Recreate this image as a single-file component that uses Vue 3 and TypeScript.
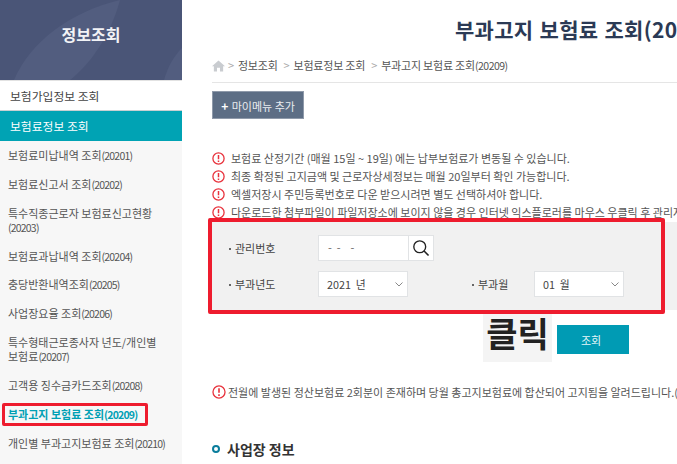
<script setup lang="ts">
interface SubItem { name: string; code: string; current?: boolean }
const subItems: SubItem[] = [
  { name: '보험료미납내역 조회', code: '(20201)' },
  { name: '보험료신고서 조회', code: '(20202)' },
  { name: '특수직종근로자 보험료신고현황', code: '(20203)' },
  { name: '보험료과납내역 조회', code: '(20204)' },
  { name: '충당반환내역조회', code: '(20205)' },
  { name: '사업장요율 조회', code: '(20206)' },
  { name: '특수형태근로종사자 년도/개인별 보험료', code: '(20207)' },
  { name: '고객용 징수금카드조회', code: '(20208)' },
  { name: '부과고지 보험료 조회', code: '(20209)', current: true },
  { name: '개인별 부과고지보험료 조회', code: '(20210)' },
]
const notices: string[] = [
  '보험료 산정기간 (매월 15일 ~ 19일) 에는 납부보험료가 변동될 수 있습니다.',
  '최종 확정된 고지금액 및 근로자상세정보는 매월 20일부터 확인 가능합니다.',
  '엑셀저장시 주민등록번호로 다운 받으시려면 별도 선택하셔야 합니다.',
  '다운로드한 첨부파일이 파일저장소에 보이지 않을 경우 인터넷 익스플로러를 마우스 우클릭 후 관리자',
]
</script>

<template>
  <div class="page">
    <aside class="side">
      <div class="side-head">
        <svg class="side-deco" viewBox="0 0 182 80" aria-hidden="true">
          <path d="M14 80C30 42 70 12 120 0C112 30 95 60 70 80Z" fill="#525d7f" />
          <path d="M164 80C168 66 174 56 182 48V80Z" fill="#525d7f" />
        </svg>
        <span class="side-title">정보조회</span>
      </div>
      <div class="top-item">보험가입정보 조회</div>
      <div class="top-item active">보험료정보 조회</div>
      <ul class="sub">
        <li v-for="s in subItems" :key="s.code" :class="{ current: s.current }">{{ s.name }}<span class="code">{{ s.code }}</span></li>
      </ul>
    </aside>

    <main class="main">
      <h1 class="title">부과고지 보험료 조회(20209)</h1>
      <div class="crumbs">
        <svg class="home" width="13" height="12" viewBox="0 0 14 12" aria-hidden="true">
          <path d="M7 0L14 6.3H12V12H8.6V8H5.4V12H2V6.3H0Z" fill="#c9ccd0" />
        </svg>
        <span class="sep">&gt;</span><span>정보조회</span>
        <span class="sep">&gt;</span><span>보험료정보 조회</span>
        <span class="sep">&gt;</span><span>부과고지 보험료 조회<span class="code wide">(20209)</span></span>
      </div>
      <button class="my-menu"><b>+</b> 마이메뉴 추가</button>

      <ul class="notices">
        <li v-for="n in notices" :key="n">
          <svg class="warn" width="13" height="13" viewBox="0 0 13 13" aria-hidden="true">
            <circle cx="6.5" cy="6.5" r="5.6" fill="none" stroke="#e8323c" stroke-width="1.3" />
            <path d="M6.5 3v4.2M6.5 8.6v1.5" stroke="#e8323c" stroke-width="1.5" />
          </svg>
          <span>{{ n }}</span>
        </li>
      </ul>

      <section class="panel">
        <div class="panel-row">
          <span class="label">관리번호</span>
          <div class="search">
            <span class="num">- &nbsp;- &nbsp; &nbsp;-</span>
            <span class="search-btn">
              <svg width="18" height="18" viewBox="0 0 20 20" aria-hidden="true">
                <circle cx="8.6" cy="8.6" r="6.6" fill="none" stroke="#222" stroke-width="1.5" />
                <path d="M13.4 13.4L18.4 18.4" stroke="#222" stroke-width="1.7" />
              </svg>
            </span>
          </div>
        </div>
        <div class="panel-row">
          <span class="label">부과년도</span>
          <div class="select">
            <span>2021 &nbsp;년</span>
            <svg width="8" height="5" viewBox="0 0 8 5" aria-hidden="true"><path d="M.5.5L4 4 7.5.5" fill="none" stroke="#888" /></svg>
          </div>
          <span class="label second">부과월</span>
          <div class="select">
            <span>01 &nbsp;월</span>
            <svg width="8" height="5" viewBox="0 0 8 5" aria-hidden="true"><path d="M.5.5L4 4 7.5.5" fill="none" stroke="#888" /></svg>
          </div>
        </div>
        <div class="red-box"></div>
      </section>

      <div class="actions">
        <span class="click">클릭</span>
        <button class="query">조회</button>
      </div>

      <p class="bottom-note">
        <svg class="warn big" width="14" height="14" viewBox="0 0 13 13" aria-hidden="true">
          <circle cx="6.5" cy="6.5" r="5.6" fill="none" stroke="#e8323c" stroke-width="1.2" />
          <path d="M6.5 3v4.2M6.5 8.6v1.5" stroke="#e8323c" stroke-width="1.5" />
        </svg>
        <span>전월에 발생된 정산보험료 2회분이 존재하며 당월 총고지보험료에 합산되어 고지됨을 알려드립니다.(*</span>
      </p>

      <h2 class="section"><i></i>사업장 정보</h2>
    </main>
  </div>
</template>

<style>
html, body { margin: 0; overflow: hidden; width: 677px; height: 464px; background: #fff; }
</style>

<style scoped>
.page {
  display: flex;
  width: 677px;
  height: 464px;
  overflow: hidden;
  font-family: "Noto Sans CJK KR", "Noto Sans", sans-serif;
  color: #444;
}
.side {
  flex: 0 0 182px;
  width: 182px;
  background: #f7f7f7;
}
.side-head {
  position: relative;
  height: 80px;
  background: #4a5577;
  display: flex;
  align-items: center;
  justify-content: center;
}
.side-deco { position: absolute; inset: 0; width: 100%; height: 100%; }
.side-title {
  position: relative;
  color: #f2f3f6;
  font-size: 16px;
  font-weight: 700;
  top: -6px;
}
.top-item {
  height: 29px;
  line-height: 29px;
  padding-left: 10px;
  font-size: 11.8px;
  background: #fff;
  color: #444;
  border-top: 1px solid #e2e2e2;
}
.top-item.active {
  background: #00a3b4;
  color: #fff;
  border-top: 1px solid #c8d0d2;
  height: 30px;
  line-height: 30px;
}
.sub { list-style: none; margin: -0.5px 0 0; padding: 0; }
.sub li {
  padding: 7.45px 10px 7.45px 8px;
  font-size: 11px;
  line-height: 14px;
  color: #555;
  word-break: keep-all;
}
.code { font-size: 10.5px; line-height: 0; letter-spacing: -0.8px; }
.code.wide { letter-spacing: -0.5px; }
.sub li.current {
  position: relative;
  color: #00a0b4;
  font-weight: 700;
}
.sub li.current::after {
  content: "";
  position: absolute;
  left: 2px;
  top: 3px;
  width: 146px;
  height: 23px;
  box-sizing: border-box;
  border: 3px solid #ee1c2e;
  border-radius: 2px;
}
.main {
  flex: 1;
  min-width: 0;
  padding-left: 30px;
  overflow: hidden;
}
.title {
  margin: 16px 0 0 243px;
  font-size: 21px;
  line-height: 26px;
  font-weight: 700;
  white-space: nowrap;
  color: #2b3a55;
  letter-spacing: 0.3px;
  word-spacing: 1px;
}
.crumbs {
  margin-top: 15px;
  height: 25px;
  width: 465px;
  display: flex;
  align-items: flex-start;
  gap: 3px;
  font-size: 11px;
  line-height: 16px;
  color: #555;
  letter-spacing: -0.2px;
  border-bottom: 1px solid #e5e5e5;
  white-space: nowrap;
}
.home { margin-top: 3px; margin-right: -3px; }
.sep { color: #aaa; margin: 0 1px 0 3px; }
.my-menu {
  display: block;
  margin-top: 8px;
  width: 92px;
  height: 28px;
  padding: 0;
  border: 1px solid #8f9aaa;
  background: #5d6e85;
  color: #e9ecf0;
  font-family: inherit;
  font-size: 11px;
}
.my-menu b { color: #fff; font-size: 12px; margin-right: 1px; }
.notices {
  list-style: none;
  margin: 30px 0 0;
  padding: 0;
  font-size: 11px;
  color: #555;
  white-space: nowrap;
}
.notices li {
  display: flex;
  align-items: center;
  height: 18px;
  gap: 6px;
}
.warn { flex: none; }
.panel {
  position: relative;
  margin: 1px 0 0 0;
  height: 88px;
  width: 465px;
  padding: 13px 0 0 16px;
  box-sizing: border-box;
  background: #f1f1f1;
  display: flex;
  flex-direction: column;
  gap: 10px;
  font-size: 11px;
}
.panel-row { display: flex; align-items: center; height: 26px; }
.label {
  width: 90px;
  color: #444;
  font-size: 11px;
}
.label::before {
  content: "";
  display: inline-block;
  width: 2px;
  height: 2px;
  margin: 0 4px 2px 1px;
  vertical-align: middle;
  background: #666;
}
.label.second { width: 63px; margin-left: 63px; }
.search {
  display: flex;
  width: 116px;
  height: 26px;
  box-sizing: border-box;
  border: 1px solid #e1e3e5;
  background: #fff;
}
.num { flex: 1; padding-left: 9px; line-height: 22px; color: #666; }
.search-btn {
  width: 24px;
  border-left: 1px solid #e1e3e5;
  display: flex;
  align-items: center;
  justify-content: center;
}
.select {
  display: flex;
  align-items: center;
  justify-content: space-between;
  width: 90px;
  height: 26px;
  box-sizing: border-box;
  padding: 0 4px 0 8px;
  border: 1px solid #e1e3e5;
  background: #fff;
  color: #444;
  font-size: 10.8px;
}
.red-box {
  position: absolute;
  left: -4px;
  top: -4px;
  width: 457px;
  height: 96px;
  box-sizing: border-box;
  border: 4.5px solid #ee1c2e;
  border-radius: 2px;
}
.actions {
  display: flex;
  margin-left: 271px;
  margin-top: 4px;
  height: 48px;
}
.click {
  width: 69px;
  height: 48px;
  margin-right: 5px;
  background: #f4f4f4;
  color: #222;
  font-size: 34px;
  font-weight: 700;
  line-height: 38px;
  text-align: center;
  white-space: nowrap;
}
.query {
  width: 72px;
  height: 29px;
  margin-top: 11px;
  padding: 0 4px 0 0;
  border: 0;
  background: #009bb4;
  color: #e6f6f8;
  font-family: inherit;
  font-size: 11px;
}
.bottom-note {
  display: flex;
  align-items: center;
  gap: 2px;
  margin: 21px 0 0 0;
  height: 18px;
  font-size: 11px;
  color: #555;
  white-space: nowrap;
}
.section {
  display: flex;
  align-items: center;
  gap: 7px;
  margin: 38px 0 0;
  font-size: 14px;
  line-height: 20px;
  font-weight: 700;
  color: #333;
}
.section i {
  width: 8px;
  height: 8px;
  box-sizing: border-box;
  border: 2.5px solid #0a7d9c;
  border-radius: 50%;
}
</style>
